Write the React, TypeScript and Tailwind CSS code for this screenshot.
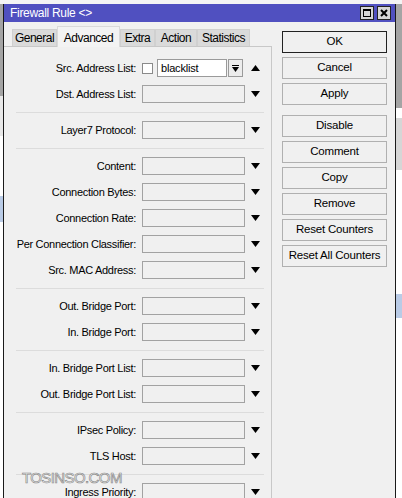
import React from 'react';

type Row = { label: string; src?: boolean };

const groups: Row[][] = [
  [{ label: 'Src. Address List:', src: true }, { label: 'Dst. Address List:' }],
  [{ label: 'Layer7 Protocol:' }],
  [
    { label: 'Content:' },
    { label: 'Connection Bytes:' },
    { label: 'Connection Rate:' },
    { label: 'Per Connection Classifier:' },
    { label: 'Src. MAC Address:' },
  ],
  [{ label: 'Out. Bridge Port:' }, { label: 'In. Bridge Port:' }],
  [{ label: 'In. Bridge Port List:' }, { label: 'Out. Bridge Port List:' }],
  [{ label: 'IPsec Policy:' }, { label: 'TLS Host:' }],
  [{ label: 'Ingress Priority:' }],
];

const tabs = [
  { name: 'General', w: 'w-[45px]' },
  { name: 'Advanced', w: 'w-[63px]' },
  { name: 'Extra', w: 'w-[35px]' },
  { name: 'Action', w: 'w-[42px]' },
  { name: 'Statistics', w: 'w-[53px]' },
];

const buttons = ['OK', 'Cancel', 'Apply', null, 'Disable', 'Comment', 'Copy', 'Remove', 'Reset Counters', 'Reset All Counters'];

const Triangle: React.FC<{ up?: boolean }> = ({ up }) => (
  <svg width="9" height="6" viewBox="0 0 9 6" className="shrink-0">
    <path d={up ? 'M0 6 L4.5 0 L9 6 Z' : 'M0 0 L9 0 L4.5 6 Z'} fill="#000" />
  </svg>
);

const FormRow: React.FC<{ row: Row }> = ({ row }) => (
  <div className="flex items-center h-[18px]">
    <div className="w-[133px] text-right pr-[1px] text-black tracking-[-0.3px] whitespace-nowrap">{row.label}</div>
    {row.src ? (
      <div className="flex items-center ml-[5px]">
        <div className="w-[11px] h-[11px] bg-white border border-[#8a8a8a]" />
        <div className="ml-[4px] w-[70px] h-[18px] bg-white border border-[#9a9a9a] flex items-center pl-[3px] tracking-[-0.2px]">
          blacklist
        </div>
        <div className="ml-[1px] w-[15px] h-[18px] border border-[#9a9a9a] bg-[#ececec] flex flex-col items-center justify-center gap-[1px]">
          <div className="w-[7px] h-[1px] bg-black" />
          <svg width="7" height="5" viewBox="0 0 7 5">
            <path d="M0 0 L7 0 L3.5 5 Z" fill="#000" />
          </svg>
        </div>
        <div className="ml-[8px]">
          <Triangle up />
        </div>
      </div>
    ) : (
      <div className="flex items-center ml-[5px]">
        <div className="w-[103px] h-[18px] border border-[#a2a2a2] bg-[#f0f0f0]" />
        <div className="ml-[6px]">
          <Triangle />
        </div>
      </div>
    )}
  </div>
);

const App: React.FC = () => {
  return (
    <div className="relative w-[402px] h-[498px] overflow-hidden bg-white font-['Liberation_Sans',Arial,sans-serif] text-[11px] text-black">
      <div className="h-[4px] bg-[#f4f4f4]" />
      <div className="flex h-[494px]">
        {/* background app, left edge */}
        <div className="w-[3px] flex flex-col">
          <div className="h-[92px] bg-[#a4a4a4]" />
          <div className="h-[40px] bg-[#e8e8e8]" />
          <div className="h-[60px] bg-white" />
          <div className="h-[26px] bg-[#b9cbe6]" />
          <div className="flex-1 bg-white" />
        </div>

        {/* window */}
        <div className="w-[393px] border-x border-[#1a1a1a] bg-[#f0f0f0] flex flex-col">
          <div className="h-[20px] bg-[#5050c0] flex items-center justify-between pl-[6px] pr-[4px]">
            <span className="text-white text-[12px] tracking-[-0.3px]">Firewall Rule &lt;&gt;</span>
            <div className="flex gap-[3px]">
              <div className="w-[14px] h-[14px] bg-[#d6d6d6] border border-[#222] flex items-center justify-center">
                <div className="w-[8px] h-[8px] border border-black border-t-2" />
              </div>
              <div className="w-[14px] h-[14px] bg-[#d6d6d6] border border-[#222] flex items-center justify-center">
                <svg width="8" height="8" viewBox="0 0 8 8">
                  <path d="M1 1 L7 7 M7 1 L1 7" stroke="#000" strokeWidth="2" />
                </svg>
              </div>
            </div>
          </div>

          <div className="flex flex-1">
            {/* left: tabs and form */}
            <div className="w-[268px] flex flex-col">
              <div className="flex items-end h-[24px] pl-[8px]">
                {tabs.map(t =>
                  t.name === 'Advanced' ? (
                    <div
                      key={t.name}
                      className={`${t.w} h-[21px] bg-[#f3f3f3] border border-b-0 border-[#dadada] flex items-start justify-center pt-[5px] text-[12px] leading-none tracking-[-0.5px] -mb-px relative z-10`}
                    >
                      {t.name}
                    </div>
                  ) : (
                    <div
                      key={t.name}
                      className={`${t.w} h-[17px] bg-[#dadada] border border-b-0 border-[#d0d0d0] flex items-end justify-center pb-[2px] text-[12px] leading-none tracking-[-0.5px]`}
                    >
                      {t.name}
                    </div>
                  )
                )}
              </div>
              <div className="flex-1 border-t border-r border-[#c8c8c8] pt-[12px] flex flex-col">
                {groups.map((g, gi) => (
                  <div key={gi} className="flex flex-col">
                    {gi > 0 && <div className="ml-[12px] w-[248px] h-px bg-[#dcdcdc] mt-[9px] mb-[8px]" />}
                    <div className="flex flex-col gap-[8px]">
                      {g.map(r => (
                        <FormRow key={r.label} row={r} />
                      ))}
                    </div>
                  </div>
                ))}
              </div>
            </div>

            {/* right: buttons */}
            <div className="flex-1 flex flex-col pl-[10px] pt-[9px] gap-[4px]">
              {buttons.map((b, i) =>
                b === null ? (
                  <div key={i} className="h-[2px]" />
                ) : (
                  <div
                    key={b}
                    className={`w-[105px] h-[22px] flex items-center justify-center text-[11.5px] tracking-[-0.2px] bg-[#f0f0f0] border ${
                      b === 'OK' ? 'border-[#222]' : 'border-[#b0b0b0]'
                    }`}
                  >
                    {b}
                  </div>
                )
              )}
            </div>
          </div>
        </div>

        {/* background app, right edge */}
        <div className="flex-1 flex flex-col">
          <div className="h-[104px] bg-[#a4a4a4]" />
          <div className="h-[10px] bg-white" />
          <div className="h-[52px] bg-[#d6d6d6]" />
          <div className="h-[124px] bg-white" />
          <div className="h-[24px] bg-[#b9cbe6]" />
          <div className="flex-1 bg-white" />
        </div>
      </div>

      <div className="absolute left-[22px] top-[470px] leading-none text-[15px] tracking-[-0.6px] text-white [-webkit-text-stroke:0.7px_#8a8a8a]">
        TOSINSO.COM
      </div>
    </div>
  );
};

export default App;
